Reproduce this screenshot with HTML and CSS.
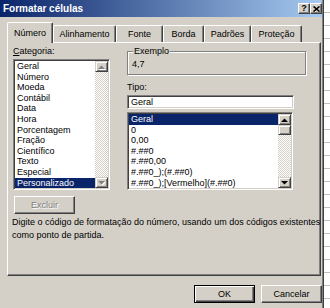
FILE: index.html
```html
<!DOCTYPE html>
<html lang="pt-BR">
  <head>
    <meta charset="UTF-8" />
    <title>Formatar células</title>
    <link rel="stylesheet" href="styles.css">
  </head>
  <body>
    <div class="screen">
      <div class="window">
        <div class="titlebar">
          <span class="title">Formatar células</span>
          <div class="caption-buttons">
            <span class="cap-btn cap-help">?</span>
            <span class="cap-btn">
              <svg width="7" height="6" viewBox="0 0 7 6"><path d="M0.5 0.5L6.5 5.5M6.5 0.5L0.5 5.5" stroke="#000" stroke-width="1.6"/></svg>
            </span>
          </div>
        </div>

        <div class="dialog">
          <div class="tabs">
            <div class="tab active">Número</div>
            <div class="tab">Alinhamento</div>
            <div class="tab">Fonte</div>
            <div class="tab">Borda</div>
            <div class="tab">Padrões</div>
            <div class="tab">Proteção</div>
          </div>

          <div class="panel">
            <div class="cols">
              <div class="col-left">
                <div class="label"><u>C</u>ategoria:</div>
                <div class="listbox cat-list">
                  <ul class="items">
                    <li>Geral</li>
                    <li>Número</li>
                    <li>Moeda</li>
                    <li>Contábil</li>
                    <li>Data</li>
                    <li>Hora</li>
                    <li>Porcentagem</li>
                    <li>Fração</li>
                    <li>Científico</li>
                    <li>Texto</li>
                    <li>Especial</li>
                    <li class="selected">Personalizado</li>
                  </ul>
                  <div class="scrollbar disabled">
                    <span class="sb-btn"><svg width="7" height="4"><path d="M0 4H7L3.5 0.5Z"/></svg></span>
                    <span class="sb-track"></span>
                    <span class="sb-btn"><svg width="7" height="4"><path d="M0 0H7L3.5 3.5Z"/></svg></span>
                  </div>
                </div>
                <button class="btn" disabled>Excluir</button>
              </div>

              <div class="col-right">
                <fieldset class="sample">
                  <legend>Exemplo</legend>
                  <span class="sample-value">4,7</span>
                </fieldset>
                <div class="label tipo">Tipo:</div>
                <div class="textbox">Geral</div>
                <div class="listbox type-list">
                  <ul class="items">
                    <li class="selected">Geral</li>
                    <li>0</li>
                    <li>0,00</li>
                    <li>#.##0</li>
                    <li>#.##0,00</li>
                    <li>#.##0_);(#.##0)</li>
                    <li>#.##0_);[Vermelho](#.##0)</li>
                  </ul>
                  <div class="scrollbar">
                    <span class="sb-btn"><svg width="7" height="4"><path d="M0 4H7L3.5 0.5Z"/></svg></span>
                    <span class="sb-thumb"></span>
                    <span class="sb-track"></span>
                    <span class="sb-btn"><svg width="7" height="4"><path d="M0 0H7L3.5 3.5Z"/></svg></span>
                  </div>
                </div>
              </div>
            </div>

            <p class="hint">
              Digite o código de formatação do número, usando um dos códigos existentes<br>
              como ponto de partida.
            </p>
          </div>

          <div class="actions">
            <button class="btn default">OK</button>
            <button class="btn">Cancelar</button>
          </div>
        </div>
      </div>
      <div class="sheet"></div>
    </div>
  </body>
</html>
```

FILE: styles.css
```css
body {
  margin: 0;
  background: #fff;
  font-family: 'Liberation Sans', Arial, sans-serif;
  font-size: 9px;
  color: #000;
}

.screen {
  display: flex;
  width: 330px;
  height: 308px;
  overflow: hidden;
}

.window {
  box-sizing: border-box;
  width: 324px;
  height: 308px;
  flex-shrink: 0;
  padding-right: 2px;
  background: #d4d0c8;
  box-shadow: inset -1px 0 #404040, inset -2px 0 #808080;
}

.sheet {
  flex: 1;
  background: repeating-linear-gradient(to bottom, #fff 0 12px, #c0c0c0 12px 13px);
}

/* title bar */

.titlebar {
  display: flex;
  align-items: center;
  justify-content: space-between;
  height: 17px;
  background: linear-gradient(to right, #0a246a, #a6caf0);
}

.title {
  padding-left: 3px;
  color: #fff;
  font-weight: bold;
  font-size: 10px;
}

.caption-buttons {
  display: flex;
}

.cap-btn {
  box-sizing: border-box;
  display: flex;
  align-items: center;
  justify-content: center;
  width: 12px;
  height: 11px;
  background: #d4d0c8;
  border: 1px solid;
  border-color: #fff #404040 #404040 #fff;
  box-shadow: inset -1px -1px #808080;
}

.cap-help {
  font-weight: bold;
  font-size: 9px;
  line-height: 9px;
}

/* tabs */

.dialog {
  padding-top: 5px;
}

.tabs {
  display: flex;
  align-items: flex-end;
  height: 20px;
  margin-left: 7px;
}

.tab {
  box-sizing: border-box;
  height: 17px;
  padding-top: 2px;
  line-height: 13px;
  text-align: center;
  border-top: 1px solid #fff;
  border-left: 1px solid #fff;
  border-right: 1px solid #404040;
  border-radius: 2px 2px 0 0;
  box-shadow: inset -1px 0 #808080;
}

.tab.active {
  position: relative;
  z-index: 1;
  height: 21px;
  margin-bottom: -1px;
  padding-top: 4px;
  background: #d4d0c8;
}

.tab:nth-child(1) { width: 46px; }
.tab:nth-child(2) { width: 63px; }
.tab:nth-child(3) { width: 47px; }
.tab:nth-child(4) { width: 41px; }
.tab:nth-child(5) { width: 47px; }
.tab:nth-child(6) { width: 51px; }

.panel {
  box-sizing: border-box;
  width: 314px;
  height: 234px;
  margin-left: 7px;
  border: 1px solid;
  border-color: #fff #404040 #404040 #fff;
  box-shadow: inset -1px -1px #808080;
}

.cols {
  display: grid;
  grid-template-columns: 97px 179px;
  column-gap: 17px;
  padding-left: 5px;
}

.label {
  line-height: 11px;
  margin-top: 3px;
}

/* sunken boxes */

.listbox,
.textbox {
  box-sizing: border-box;
  background: #fff;
  border: 1px solid;
  border-color: #808080 #fff #fff #808080;
  box-shadow: inset 1px 1px #404040, inset -1px -1px #d4d0c8;
}

.listbox {
  display: flex;
  padding: 1px;
}

.items {
  flex: 1;
  margin: 0;
  padding: 0;
  list-style: none;
  overflow: hidden;
}

.items li {
  height: 10.6px;
  line-height: 10.6px;
  padding-left: 2px;
  white-space: nowrap;
}

.items li.selected {
  background: #0a246a;
  color: #fff;
}

.cat-list {
  height: 131px;
  margin-top: 2px;
}

.scrollbar {
  display: flex;
  flex-direction: column;
  width: 13px;
}

.sb-btn,
.sb-thumb {
  box-sizing: border-box;
  display: flex;
  align-items: center;
  justify-content: center;
  height: 11px;
  background: #d4d0c8;
  border: 1px solid;
  border-color: #d4d0c8 #404040 #404040 #d4d0c8;
  box-shadow: inset 1px 1px #fff, inset -1px -1px #808080;
}

.sb-thumb {
  height: 10px;
}

.sb-btn svg {
  fill: #000;
}

.scrollbar.disabled .sb-btn svg {
  fill: #808080;
  filter: drop-shadow(1px 1px 0 #fff);
}

.sb-track {
  flex: 1;
  background-color: #fff;
  background-image: repeating-conic-gradient(#d4d0c8 0 25%, #fff 0 50%);
  background-size: 2px 2px;
}

.btn {
  box-sizing: border-box;
  width: 61px;
  height: 18px;
  padding: 0;
  background: #d4d0c8;
  border: 1px solid;
  border-color: #fff #404040 #404040 #fff;
  box-shadow: inset -1px -1px #808080;
  font-family: inherit;
  font-size: 9px;
  color: #000;
}

.btn:disabled {
  color: #808080;
  text-shadow: 1px 1px 0 #fff;
}

.btn.default {
  border-color: #000;
  box-shadow: inset 1px 1px #fff, inset -1px -1px #404040, inset -2px -2px #808080;
}

.col-left .btn {
  margin-top: 6px;
  margin-left: 1px;
}

/* right column */

.sample {
  box-sizing: border-box;
  height: 29px;
  margin: 3px 0 0;
  padding: 0 4px;
  min-width: 0;
  border: 1px solid #808080;
  box-shadow: 1px 1px 0 #fff, inset 1px 1px 0 #fff;
}

.sample legend {
  margin-left: 1px;
  padding: 0 1px;
  line-height: 11px;
  background: #d4d0c8;
}

.sample-value {
  display: block;
  line-height: 11px;
  margin-top: 2px;
}

.tipo {
  margin-top: 7px;
}

.textbox {
  width: 167px;
  height: 14px;
  margin-top: 2px;
  padding-left: 3px;
  line-height: 12px;
}

.type-list {
  width: 166px;
  height: 78px;
  margin-top: 3px;
}

.hint {
  margin: 2px 0 0 4px;
  line-height: 13px;
  white-space: nowrap;
}

.actions {
  display: flex;
  justify-content: flex-end;
  gap: 6px;
  margin-top: 9px;
}
```
